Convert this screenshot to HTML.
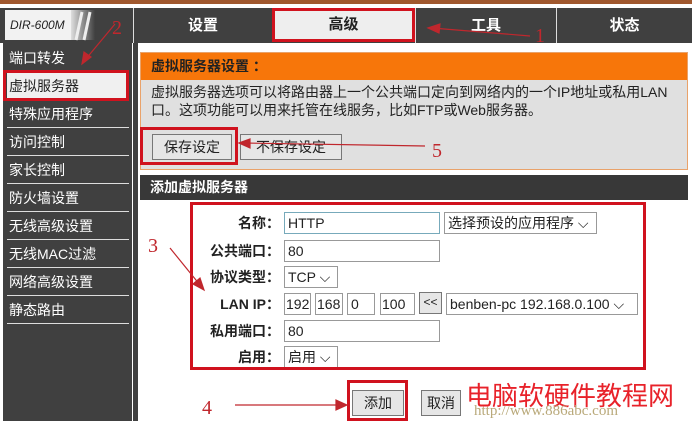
<!DOCTYPE html>
<html><head><meta charset="utf-8"><style>
*{margin:0;padding:0;box-sizing:border-box}
body{width:692px;height:421px;overflow:hidden;background:#fff;position:relative;font-family:"Liberation Sans","Noto Sans CJK SC",sans-serif;font-size:13px;color:#222}
.a{position:absolute}
.topbar{left:0;top:0;width:692px;height:4px;background:#a0582e}
.nav{left:0;top:8px;width:692px;height:35px;background:#404040}
.logo{left:5px;top:10px;width:66px;height:30px;background:#f2f2f2;font-style:italic;font-size:12px;line-height:30px;padding-left:5px;color:#222}
.tab{top:8px;height:35px;line-height:35px;text-align:center;color:#fff;font-weight:bold;font-size:15px;border-left:1px solid #ddd}
.left{left:3px;top:43px;width:129px;height:378px;background:#404040}
.mi{left:7px;width:122px;height:28px;color:#fff;font-size:14px;line-height:28px;border-bottom:1px solid #ddd;padding-left:2px}
.sel{background:#f0f0f0;color:#222}
.box{border:3px solid #d0121e}
.orange{left:140px;top:52px;width:548px;height:118px;background:#e0e0e0;border:1px solid #e9a26a}
.oh{left:141px;top:53px;width:546px;height:27px;background:#f7760a;color:#222;font-weight:bold;font-size:14px;line-height:27px;padding-left:10px}
.dark{left:140px;top:175px;width:548px;height:25px;background:#383838;color:#fff;font-weight:bold;font-size:14px;line-height:25px;padding-left:10px}
.lbl{width:140px;text-align:right;font-weight:bold;font-size:14px;left:140px}
.in{border:1px solid #999;background:#fff;height:22px;font-size:14px;line-height:20px;padding-left:3px;white-space:nowrap;overflow:hidden}
.btn{border:1px solid #777;background:#e6e6e6;font-size:14px;text-align:center;line-height:24px}
</style></head><body>
<div class="a topbar"></div>
<div class="a nav"></div>
<div class="a" style="left:5px;top:10px;width:90px;height:30px;background:linear-gradient(90deg,#f2f2f2 70%,#404040 100%)"></div>
<div class="a logo">DIR-600M</div>
<svg class="a" style="left:70px;top:10px" width="32" height="32"><path d="M6 30 L12 2 M14 30 L20 2" stroke="#eee" stroke-width="3"/></svg>
<div class="a tab" style="left:133px;width:139px">设置</div>
<div class="a tab" style="left:272px;width:143px;background:#eee;color:#222;border:3px solid #d0121e;height:34px;line-height:28px">高级</div>
<div class="a tab" style="left:415px;width:141px">工具</div>
<div class="a tab" style="left:556px;width:136px">状态</div>
<div class="a left"></div>
<div class="a mi" style="top:44px">端口转发</div>
<div class="a mi sel" style="top:72px">虚拟服务器</div>
<div class="a box" style="left:3px;top:70px;width:126px;height:31px"></div>
<div class="a mi" style="top:100px">特殊应用程序</div>
<div class="a mi" style="top:128px">访问控制</div>
<div class="a mi" style="top:156px">家长控制</div>
<div class="a mi" style="top:184px">防火墙设置</div>
<div class="a mi" style="top:212px">无线高级设置</div>
<div class="a mi" style="top:240px">无线MAC过滤</div>
<div class="a mi" style="top:268px">网络高级设置</div>
<div class="a mi" style="top:296px">静态路由</div>
<div class="a" style="left:133px;top:43px;width:5px;height:378px;background:#404040"></div>
<div class="a orange"></div>
<div class="a oh">虚拟服务器设置 ：</div>
<div class="a" style="left:151px;top:83px;width:522px;font-size:14px;line-height:18px">虚拟服务器选项可以将路由器上一个公共端口定向到网络内的一个IP地址或私用LAN口。这项功能可以用来托管在线服务，比如FTP或Web服务器。</div>
<div class="a btn" style="left:152px;top:134px;width:80px;height:26px">保存设定</div>
<div class="a btn" style="left:240px;top:134px;width:102px;height:26px">不保存设定</div>
<div class="a box" style="left:140px;top:127px;width:98px;height:38px"></div>
<div class="a dark">添加虚拟服务器</div>
<div class="a lbl" style="top:213px">名称：</div>
<div class="a in" style="left:284px;top:212px;width:156px;border-color:#7ab">HTTP</div>
<div class="a in" style="left:444px;top:212px;width:153px">选择预设的应用程序 ⌵</div>
<div class="a lbl" style="top:241px">公共端口：</div>
<div class="a in" style="left:284px;top:240px;width:156px">80</div>
<div class="a lbl" style="top:267px">协议类型：</div>
<div class="a in" style="left:284px;top:266px;width:54px">TCP ⌵</div>
<div class="a lbl" style="top:294px">LAN IP：</div>
<div class="a in" style="left:284px;top:293px;width:27px;padding-left:1px">192</div>
<div class="a in" style="left:315px;top:293px;width:28px;padding-left:1px">168</div>
<div class="a in" style="left:347px;top:293px;width:28px">0</div>
<div class="a in" style="left:380px;top:293px;width:35px;padding-left:1px">100</div>
<div class="a btn" style="left:419px;top:292px;width:23px;height:22px;line-height:18px;font-size:12px">&lt;&lt;</div>
<div class="a in" style="left:446px;top:293px;width:192px">benben-pc 192.168.0.100 ⌵</div>
<div class="a lbl" style="top:321px">私用端口：</div>
<div class="a in" style="left:284px;top:320px;width:156px">80</div>
<div class="a lbl" style="top:347px">启用：</div>
<div class="a in" style="left:284px;top:346px;width:54px">启用 ⌵</div>
<div class="a box" style="left:190px;top:202px;width:456px;height:168px"></div>
<div class="a btn" style="left:352px;top:390px;width:52px;height:26px">添加</div>
<div class="a btn" style="left:421px;top:390px;width:40px;height:26px">取消</div>
<div class="a box" style="left:347px;top:380px;width:61px;height:41px"></div>
<div class="a" style="left:466px;top:382px;font-size:26px;line-height:28px;color:#e8222a;white-space:nowrap">电脑软硬件教程网</div>
<div class="a" style="left:474px;top:404px;font-family:'Liberation Serif',serif;font-size:15px;color:#b9a97a;line-height:15px">http://www.886abc.com</div>
<svg class="a" style="left:0;top:0" width="692" height="421">
<g stroke="#c0272d" fill="#c0272d" stroke-width="1.2">
<line x1="530" y1="36" x2="432" y2="28"/><polygon points="428,28 440,24 439,33"/>
<line x1="115" y1="24" x2="85" y2="60"/><polygon points="82,64 84,52 91,57"/>
<line x1="425" y1="146" x2="244" y2="143"/><polygon points="239,143 250,139 250,148"/>
<line x1="170" y1="248" x2="200" y2="285"/><polygon points="204,290 193,284 200,278"/>
<line x1="235" y1="405" x2="342" y2="405"/><polygon points="347,405 336,400 336,410"/>
</g>
<g fill="#c0272d" font-family="Liberation Serif,serif" font-size="20">
<text x="535" y="42">1</text><text x="112" y="34">2</text><text x="148" y="252">3</text><text x="202" y="414">4</text><text x="432" y="157">5</text>
</g>
</svg>
</body></html>
